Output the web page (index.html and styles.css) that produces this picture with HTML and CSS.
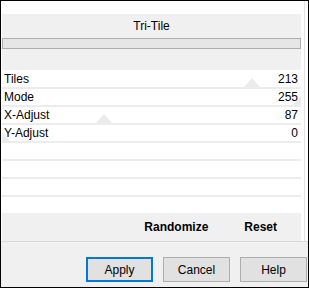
FILE: index.html
```html
<!DOCTYPE html>
<html lang="en">

<head>
  <meta charset="UTF-8">
  <meta name="viewport" content="width=device-width, initial-scale=1.0">
  <title>Tri-Tile</title>
  <link rel="stylesheet" href="styles.css">
</head>

<body>
  <div class="dialog">
    <div class="pane">
      <div class="header">
        <div class="title">Tri-Tile</div>
        <div class="bar"></div>
      </div>

      <div class="rows">
        <div class="row">
          <span class="thumb" style="left: 83.5%"></span>
          <span class="label">Tiles</span><span class="value">213</span>
        </div>
        <div class="row">
          <span class="thumb" style="left: 100%"></span>
          <span class="label">Mode</span><span class="value">255</span>
        </div>
        <div class="row">
          <span class="thumb" style="left: 34.1%"></span>
          <span class="label">X-Adjust</span><span class="value">87</span>
        </div>
        <div class="row">
          <span class="thumb" style="left: 0%"></span>
          <span class="label">Y-Adjust</span><span class="value">0</span>
        </div>
        <div class="row"></div>
        <div class="row"></div>
        <div class="row"></div>
      </div>

      <div class="actions">
        <span class="action action--random">Randomize</span>
        <span class="action">Reset</span>
      </div>
    </div>

    <div class="footer">
      <button type="button" class="btn btn--default">Apply</button>
      <button type="button" class="btn">Cancel</button>
      <button type="button" class="btn">Help</button>
    </div>
  </div>
</body>

</html>
```

FILE: styles.css
```css
body {
  margin: 0;
  font-family: "Liberation Sans", Arial, sans-serif;
  font-size: 12px;
  color: #000;
}
.dialog {
  width: 309px;
  height: 288px;
  box-sizing: border-box;
  border: 1px solid #000;
  background: #f0f0f0;
  display: flex;
  flex-direction: column;
}
.pane {
  height: 241px;
  box-sizing: border-box;
  background: #fff;
  border-bottom: 1px solid #d9d9d9;
  padding: 13px 0 0 1px;
  position: relative;
}
.pane::after {
  content: "";
  position: absolute;
  top: 0;
  bottom: 0;
  left: 303px;
  width: 1px;
  background: #e3e3e3;
}
.header {
  width: 299px;
  height: 56px;
  background: #f0f0f0;
  box-sizing: border-box;
}
.title {
  height: 24px;
  line-height: 24px;
  text-align: center;
  font-size: 12px;
}
.bar {
  height: 11px;
  box-sizing: border-box;
  border: 1px solid #adadad;
  background: #e6e6e6;
}
.rows {
  width: 299px;
  margin-top: 1px;
}
.row {
  position: relative;
  height: 18px;
  box-sizing: border-box;
  border-bottom: 2px solid #ececec;
  display: flex;
  justify-content: space-between;
  align-items: center;
  padding: 0 3px 0 2px;
  overflow: hidden;
}
.thumb {
  position: absolute;
  bottom: 0;
  transform: translateX(-50%);
  width: 0;
  height: 0;
  border-left: 8px solid transparent;
  border-right: 8px solid transparent;
  border-bottom: 9px solid #ebebeb;
}
.label,
.value {
  position: relative;
}
.actions {
  width: 299px;
  height: 28px;
  margin-top: 16px;
  background: #f0f0f0;
  display: flex;
  justify-content: flex-end;
  align-items: center;
  padding-right: 24px;
  box-sizing: border-box;
  gap: 36px;
}
.action {
  font-weight: bold;
}
.footer {
  flex: 1;
  display: flex;
  justify-content: flex-end;
  align-items: flex-start;
  gap: 10px;
  padding: 15px 1px 0 0;
}
.btn {
  width: 67px;
  height: 25px;
  box-sizing: border-box;
  border: 1px solid #adadad;
  background: #e1e1e1;
  font-family: "Liberation Sans", Arial, sans-serif;
  font-size: 12px;
  color: #000;
  padding: 0;
}
.btn--default {
  border: 2px solid #0078d7;
}
```
